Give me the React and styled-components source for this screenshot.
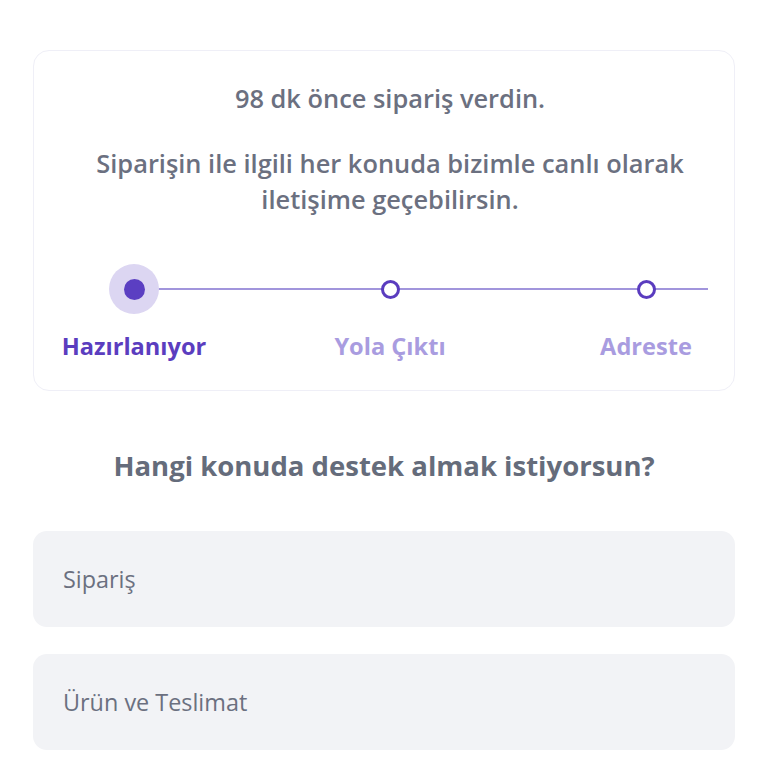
import React from "react";
import styled, { createGlobalStyle } from "styled-components";

const Global = createGlobalStyle`
  html, body { margin: 0; padding: 0; background: #ffffff; }
  body { font-family: "Open Sans", "Noto Sans", sans-serif; }
  * { box-sizing: border-box; }
`;

const Page = styled.div`
  padding: 50px 33px 0 33px;
  display: flex;
  flex-direction: column;
`;

const Card = styled.section`
  border: 1.5px solid #efeff7;
  border-radius: 16px;
  padding: 29px 16px 29px 28px;
  display: flex;
  flex-direction: column;
  align-items: stretch;
`;

const Text = styled.p`
  margin: 0 0 ${(p) => p.$mb || 0}px 0;
  font-size: 25.4px;
  line-height: 36px;
  font-weight: 600;
  color: #6b7080;
  text-align: center;
  white-space: nowrap;
`;

const Stepper = styled.div`
  display: flex;
  flex-direction: column;
  margin-top: 47px;
`;

const Track = styled.div`
  position: relative;
  display: flex;
  justify-content: space-between;
  height: 50px;
  &::before {
    content: "";
    position: absolute;
    left: 72px;
    right: 10px;
    top: 24px;
    height: 1.5px;
    background: #a195dc;
  }
`;

const Col = styled.div`
  width: 144px;
  display: flex;
  justify-content: center;
  align-items: center;
  position: relative;
`;

const Halo = styled.div`
  width: 50px;
  height: 50px;
  border-radius: 50%;
  background: #dcd6f2;
  display: flex;
  align-items: center;
  justify-content: center;
`;

const Dot = styled.div`
  width: 21px;
  height: 21px;
  border-radius: 50%;
  background: #5b3fc2;
`;

const Ring = styled.div`
  width: 19px;
  height: 19px;
  border-radius: 50%;
  background: #ffffff;
  border: 3px solid #5a3cbf;
`;

const Labels = styled.div`
  display: flex;
  justify-content: space-between;
  margin-top: 17px;
`;

const Label = styled.div`
  width: 144px;
  display: flex;
  justify-content: center;
  font-size: 23.6px;
  line-height: 30px;
  font-weight: 700;
  color: ${(p) => (p.$active ? "#5b3dbf" : "#a99ce0")};
  white-space: nowrap;
`;

const Heading = styled.h2`
  margin: 57px 0 47px 0;
  font-size: 27.5px;
  line-height: 36px;
  font-weight: 700;
  color: #656c7b;
  text-align: center;
`;

const Options = styled.div`
  display: flex;
  flex-direction: column;
  gap: 27px;
`;

const Option = styled.div`
  height: 96px;
  border-radius: 14px;
  background: #f2f3f6;
  display: flex;
  align-items: center;
  padding-left: 30px;
  font-size: 23.4px;
  font-weight: 400;
  color: #6b7080;
`;

const steps = ["Hazırlanıyor", "Yola Çıktı", "Adreste"];

export default function App() {
  return (
    <>
      <Global />
      <Page>
        <Card>
          <Text $mb={29}>98 dk önce sipariş verdin.</Text>
          <Text>
            Siparişin ile ilgili her konuda bizimle canlı olarak
            <br />
            iletişime geçebilirsin.
          </Text>
          <Stepper>
            <Track>
              {steps.map((s, i) => (
                <Col key={s}>
                  {i === 0 ? (
                    <Halo>
                      <Dot />
                    </Halo>
                  ) : (
                    <Ring />
                  )}
                </Col>
              ))}
            </Track>
            <Labels>
              {steps.map((s, i) => (
                <Label key={s} $active={i === 0}>
                  {s}
                </Label>
              ))}
            </Labels>
          </Stepper>
        </Card>
        <Heading>Hangi konuda destek almak istiyorsun?</Heading>
        <Options>
          <Option>Sipariş</Option>
          <Option>Ürün ve Teslimat</Option>
        </Options>
      </Page>
    </>
  );
}
